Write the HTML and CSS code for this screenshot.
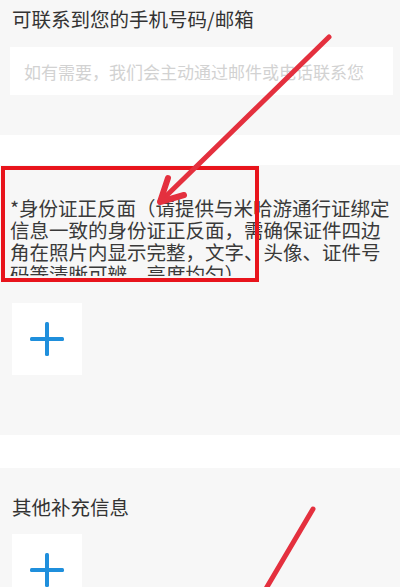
FILE: index.html
```html
<!DOCTYPE html>
<html lang="zh">
<head>
<meta charset="utf-8">
<title>反馈</title>
<link rel="stylesheet" href="styles.css">
</head>
<body>
<div class="page">
  <section class="sec sec-contact">
    <div class="title">可联系到您的手机号码/邮箱</div>
    <div class="input">如有需要，我们会主动通过邮件或电话联系您</div>
  </section>
  <div class="gap"></div>
  <section class="sec sec-id">
    <div class="label">*身份证正反面（请提供与米哈游通行证绑定信息一致的身份证正反面，需确保证件四边角在照片内显示完整，文字、头像、证件号码等清晰可辨，亮度均匀）</div>
    <div class="upload">
      <svg class="plus" viewBox="0 0 34 34" width="34" height="34"><rect x="15" y="0" width="4" height="34" rx="1.5"/><rect x="0" y="15" width="34" height="4" rx="1.5"/></svg>
    </div>
  </section>
  <div class="gap gap2"></div>
  <section class="sec sec-other">
    <div class="title">其他补充信息</div>
    <div class="upload">
      <svg class="plus" viewBox="0 0 34 34" width="34" height="34"><rect x="15" y="0" width="4" height="34" rx="1.5"/><rect x="0" y="15" width="34" height="4" rx="1.5"/></svg>
    </div>
  </section>
  <div class="mark-box"></div>
  <svg class="annot" viewBox="0 0 400 587" width="400" height="587">
    <line x1="329" y1="37" x2="162" y2="200" class="stroke"/>
    <polyline points="184,195 160,202 168,178" class="stroke head"/>
    <line x1="313" y1="509" x2="264" y2="592" class="stroke"/>
  </svg>
</div>
</body>
</html>
```
FILE: styles.css
```css
html, body {
  margin: 0;
  padding: 0;
  background: #f7f7f7;
}
.page {
  position: relative;
  width: 400px;
  height: 587px;
  overflow: hidden;
  font-family: "Noto Sans CJK SC", "Noto Sans", sans-serif;
  color: #333;
}
.sec {
  background: #f7f7f7;
}
.sec-contact {
  padding: 8px 7px 40px 10px;
}
.title {
  font-size: 19.5px;
  line-height: 22px;
  padding-left: 2px;
  color: #333;
}
.input {
  margin-top: 17px;
  height: 48px;
  background: #fff;
  padding-left: 14px;
  display: flex;
  align-items: center;
  font-size: 17px;
  color: #d2d2d2;
  white-space: nowrap;
  overflow: hidden;
}
.gap {
  height: 30px;
  background: #fff;
}
.gap2 {
  height: 33px;
}
.sec-id {
  padding: 32px 4px 60px 10px;
}
.label {
  font-size: 19.5px;
  line-height: 22px;
  color: #3a3a3a;
  max-height: 79px;
  overflow: hidden;
}
.upload {
  width: 70px;
  height: 72px;
  background: #fff;
  margin-top: 27px;
  margin-left: 2px;
  display: flex;
  align-items: center;
  justify-content: center;
}
.plus {
  fill: #1f8fdc;
}
.sec-other {
  padding: 28px 4px 40px 10px;
}
.sec-other .upload {
  margin-top: 16px;
}
.mark-box {
  position: absolute;
  left: 1px;
  top: 166px;
  width: 250px;
  height: 108px;
  border: 4px solid #e8141c;
}
.annot {
  position: absolute;
  left: 0;
  top: 0;
}
.stroke {
  stroke: #e4303e;
  stroke-width: 5;
  stroke-linecap: round;
  fill: none;
}
.head {
  stroke-linejoin: round;
  stroke-width: 6;
}
```
